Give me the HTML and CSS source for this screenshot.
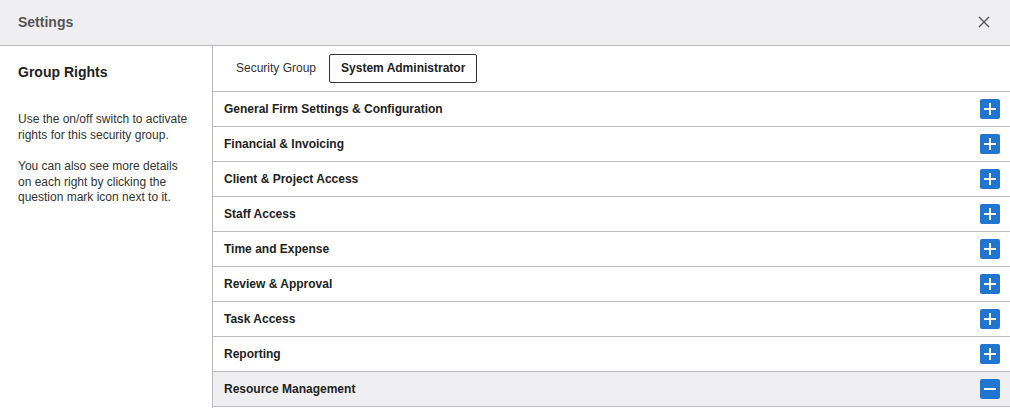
FILE: index.html
```html
<!DOCTYPE html>
<html>
<head>
<meta charset="utf-8">
<link rel="stylesheet" href="styles.css">
</head>
<body>
<div class="modal">
  <div class="header">
    <span class="title">Settings</span>
    <span class="close"><svg width="12" height="12" viewBox="0 0 12 12"><path d="M1 1 L11 11 M11 1 L1 11" stroke="#555" stroke-width="1.4" fill="none"/></svg></span>
  </div>
  <div class="body">
    <aside class="side">
      <h2>Group Rights</h2>
      <p>Use the on/off switch to activate rights for this security group.</p>
      <p>You can also see more details on each right by clicking the question mark icon next to it.</p>
    </aside>
    <main class="main">
      <div class="tabs">
        <span class="tab">Security Group</span>
        <span class="tab active">System Administrator</span>
      </div>
      <div class="row"><span>General Firm Settings &amp; Configuration</span><span class="btn plus"></span></div>
      <div class="row"><span>Financial &amp; Invoicing</span><span class="btn plus"></span></div>
      <div class="row"><span>Client &amp; Project Access</span><span class="btn plus"></span></div>
      <div class="row"><span>Staff Access</span><span class="btn plus"></span></div>
      <div class="row"><span>Time and Expense</span><span class="btn plus"></span></div>
      <div class="row"><span>Review &amp; Approval</span><span class="btn plus"></span></div>
      <div class="row"><span>Task Access</span><span class="btn plus"></span></div>
      <div class="row"><span>Reporting</span><span class="btn plus"></span></div>
      <div class="row open"><span>Resource Management</span><span class="btn minus"></span></div>
    </main>
  </div>
</div>
</body>
</html>
```
FILE: styles.css
```css
* { box-sizing: border-box; }
html, body { margin: 0; padding: 0; }
body {
  width: 1010px;
  height: 408px;
  overflow: hidden;
  font-family: "Liberation Sans", Arial, sans-serif;
  color: #222;
  background: #fff;
}
.header {
  height: 46px;
  background: #efeff1;
  border-bottom: 1px solid #bdbdbd;
  display: flex;
  align-items: center;
  justify-content: space-between;
  padding: 0 20px 2px 18px;
}
.title {
  font-size: 14px;
  font-weight: bold;
  color: #555;
}
.close { display: flex; }
.body { display: flex; }
.side {
  width: 213px;
  flex: none;
  border-right: 1px solid #bdbdbd;
  padding: 18px 18px 0 18px;
  height: 362px;
}
.side h2 {
  margin: 0 0 32px 0;
  font-size: 14px;
  font-weight: bold;
  line-height: 16px;
  color: #222;
}
.side p {
  margin: 0 0 16px 0;
  font-size: 12px;
  line-height: 15.5px;
  color: #333;
}
.main { flex: 1; }
.tabs {
  height: 46px;
  border-bottom: 1px solid #bdbdbd;
  display: flex;
  align-items: center;
  padding: 0 0 0 15px;
}
.tab {
  font-size: 12px;
  color: #333;
  height: 29px;
  line-height: 27px;
  padding: 0 7px;
  border: 1px solid transparent;
}
.tab.active {
  margin-left: 5px;
  padding: 0 11px;
  border: 1px solid #333;
  border-radius: 2px;
  font-weight: bold;
  color: #222;
}
.row {
  height: 35px;
  border-bottom: 1px solid #bdbdbd;
  display: flex;
  align-items: center;
  justify-content: space-between;
  padding: 0 10px 0 11px;
  font-size: 12px;
  font-weight: bold;
  color: #222;
}
.row.open { background: #efeff1; }
.btn {
  width: 20px;
  height: 20px;
  border-radius: 2px;
  background: #1f75d0;
  position: relative;
}
.btn::before, .btn.plus::after {
  content: "";
  position: absolute;
  background: #fff;
  left: 4px;
  top: 9px;
  width: 12px;
  height: 2px;
}
.btn.plus::after {
  left: 9px;
  top: 4px;
  width: 2px;
  height: 12px;
}
```
